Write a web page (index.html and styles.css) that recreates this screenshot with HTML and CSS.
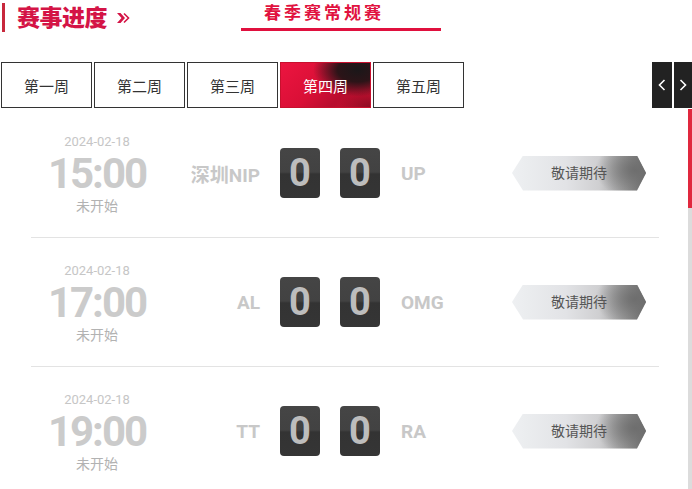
FILE: index.html
```html
<!DOCTYPE html>
<html lang="zh-CN">
<head>
  <meta charset="UTF-8" />
  <meta name="viewport" content="width=device-width, initial-scale=1" />
  <title>赛事进度</title>
  <link rel="stylesheet" href="styles.css">
</head>
<body>
  <header class="head">
    <div class="title">
      <span class="bar"></span>
      <h1>赛事进度</h1>
      <svg class="more" width="16" height="12" viewBox="0 0 16 12">
        <polygon points="1,1 4.5,1 9,6 4.5,11 1,11 5.5,6" fill="#d41446" />
        <polyline points="8,1.5 12.5,6 8,10.5" fill="none" stroke="#d41446" stroke-width="1.6" />
      </svg>
    </div>
    <div class="stage"><span>春季赛常规赛</span></div>
  </header>

  <nav class="weeks">
    <button class="week">第一周</button>
    <button class="week">第二周</button>
    <button class="week">第三周</button>
    <button class="week active">第四周</button>
    <button class="week">第五周</button>
    <div class="pager">
      <button class="pg pg-prev">
        <svg width="8" height="12" viewBox="0 0 8 12"><polyline points="6.5,1 1.5,6 6.5,11" fill="none" stroke="#fff" stroke-width="1.6" /></svg>
      </button>
      <button class="pg pg-next">
        <svg width="8" height="12" viewBox="0 0 8 12"><polyline points="1.5,1 6.5,6 1.5,11" fill="none" stroke="#fff" stroke-width="1.6" /></svg>
      </button>
    </div>
  </nav>

  <section class="board">
    <div class="matches">
      <div class="match">
        <div class="when">
          <div class="date">2024-02-18</div>
          <div class="time">15:00</div>
          <div class="state">未开始</div>
        </div>
        <div class="team team-home">深圳NIP</div>
        <div class="score">0</div>
        <div class="score">0</div>
        <div class="team team-away">UP</div>
        <div class="action">敬请期待</div>
      </div>

      <div class="match">
        <div class="when">
          <div class="date">2024-02-18</div>
          <div class="time">17:00</div>
          <div class="state">未开始</div>
        </div>
        <div class="team team-home">AL</div>
        <div class="score">0</div>
        <div class="score">0</div>
        <div class="team team-away">OMG</div>
        <div class="action">敬请期待</div>
      </div>

      <div class="match">
        <div class="when">
          <div class="date">2024-02-18</div>
          <div class="time">19:00</div>
          <div class="state">未开始</div>
        </div>
        <div class="team team-home">TT</div>
        <div class="score">0</div>
        <div class="score">0</div>
        <div class="team team-away">RA</div>
        <div class="action">敬请期待</div>
      </div>
    </div>
    <div class="track"><div class="thumb"></div></div>
  </section>
</body>
</html>
```

FILE: styles.css
```css
html, body {
  margin: 0;
  padding: 0;
  height: 489px;
  overflow: hidden;
  background: #fff;
}
body {
  font-family: Roboto, "Noto Sans CJK SC", sans-serif;
  color: #333;
}
button {
  font-family: inherit;
  cursor: pointer;
}

/* Header */
.head {
  display: flex;
  height: 31px;
}
.title {
  width: 241px;
  display: flex;
  align-items: flex-start;
}
.bar {
  width: 3px;
  height: 29px;
  margin: 3px 0 0 2px;
  background: #c8283c;
}
.title h1 {
  margin: 2px 0 0 12px;
  font-family: "Noto Sans CJK SC", sans-serif;
  font-size: 23px;
  line-height: 29px;
  font-weight: 900;
  letter-spacing: -0.5px;
  color: #d41446;
}
.more {
  margin: 12px 0 0 9px;
}
.stage {
  box-sizing: border-box;
  width: 200px;
  height: 31px;
  padding-left: 23px;
  border-bottom: 3px solid #e0103e;
}
.stage span {
  display: block;
  font-family: "Noto Sans CJK SC", sans-serif;
  font-size: 17px;
  line-height: 24px;
  font-weight: 700;
  letter-spacing: 3px;
  color: #e1123f;
}

/* Week tabs */
.weeks {
  display: flex;
  gap: 2px;
  margin-top: 31px;
  padding-left: 1px;
  height: 46px;
}
.week {
  width: 91px;
  height: 46px;
  padding: 0;
  border: 1px solid #333;
  background: #fff;
  font-size: 15px;
  color: #333;
}
.week.active {
  border-color: #c8102e;
  color: #fff;
  background:
    radial-gradient(ellipse 50% 60% at 86% 16%, #1b1719 0%, #2c1418 45%, rgba(60, 10, 20, 0) 100%),
    radial-gradient(ellipse 35% 40% at 100% 100%, #8e0c24 0%, rgba(142, 12, 36, 0) 100%),
    linear-gradient(135deg, #ec1540 0%, #d90f36 45%, #b80d2e 70%, #c9102f 100%);
}
.pager {
  display: flex;
  gap: 2px;
  margin-left: auto;
}
.pg {
  width: 20px;
  height: 46px;
  padding: 0;
  border: none;
  background: #222;
  display: flex;
  align-items: center;
  justify-content: center;
}
.pg-next {
  width: 18px;
}

/* Match list */
.board {
  display: flex;
  margin-top: 1px;
}
.matches {
  width: 628px;
  margin-left: 31px;
}
.match {
  display: flex;
  align-items: center;
  height: 128px;
  border-bottom: 1px solid #e3e3e3;
}
.when {
  width: 132px;
  text-align: center;
  margin-top: 2px;
}
.date {
  font-size: 13px;
  line-height: 15px;
  color: #c6c6c6;
}
.time {
  font-size: 42px;
  line-height: 49px;
  font-weight: 700;
  letter-spacing: -2px;
  color: #cbcbcb;
}
.state {
  font-size: 14px;
  line-height: 16px;
  color: #b2b2b2;
}
.team {
  font-size: 19px;
  font-weight: 700;
  color: #c8c8c8;
}
.team-home {
  width: 97px;
  text-align: right;
}
.team-away {
  width: 111px;
  margin-left: 21px;
}
.score {
  width: 40px;
  height: 50px;
  margin-left: 20px;
  border-radius: 4px;
  background: linear-gradient(#454545 0%, #424242 48%, #333 52%, #353535 100%);
  font-size: 38px;
  line-height: 50px;
  font-weight: 700;
  text-align: center;
  color: #bdbdbd;
}
.action {
  width: 134px;
  height: 35px;
  line-height: 35px;
  text-align: center;
  font-size: 14px;
  color: #555;
  clip-path: polygon(0 50%, 11px 0, calc(100% - 9px) 0, 100% 50%, calc(100% - 9px) 100%, 11px 100%);
  background:
    radial-gradient(ellipse 30% 80% at 92% 40%, #6e6e6e 0%, rgba(110, 110, 110, 0) 100%),
    linear-gradient(90deg, #eef0f2 0%, #e2e3e6 40%, #cfcfd1 65%, #9a9a9a 85%, #6a6a6a 100%);
}

/* Scroll track */
.track {
  width: 4px;
  margin-left: auto;
  background: #dcdcdc;
  height: 400px;
}
.thumb {
  height: 99px;
  background: #e0283e;
}
```
